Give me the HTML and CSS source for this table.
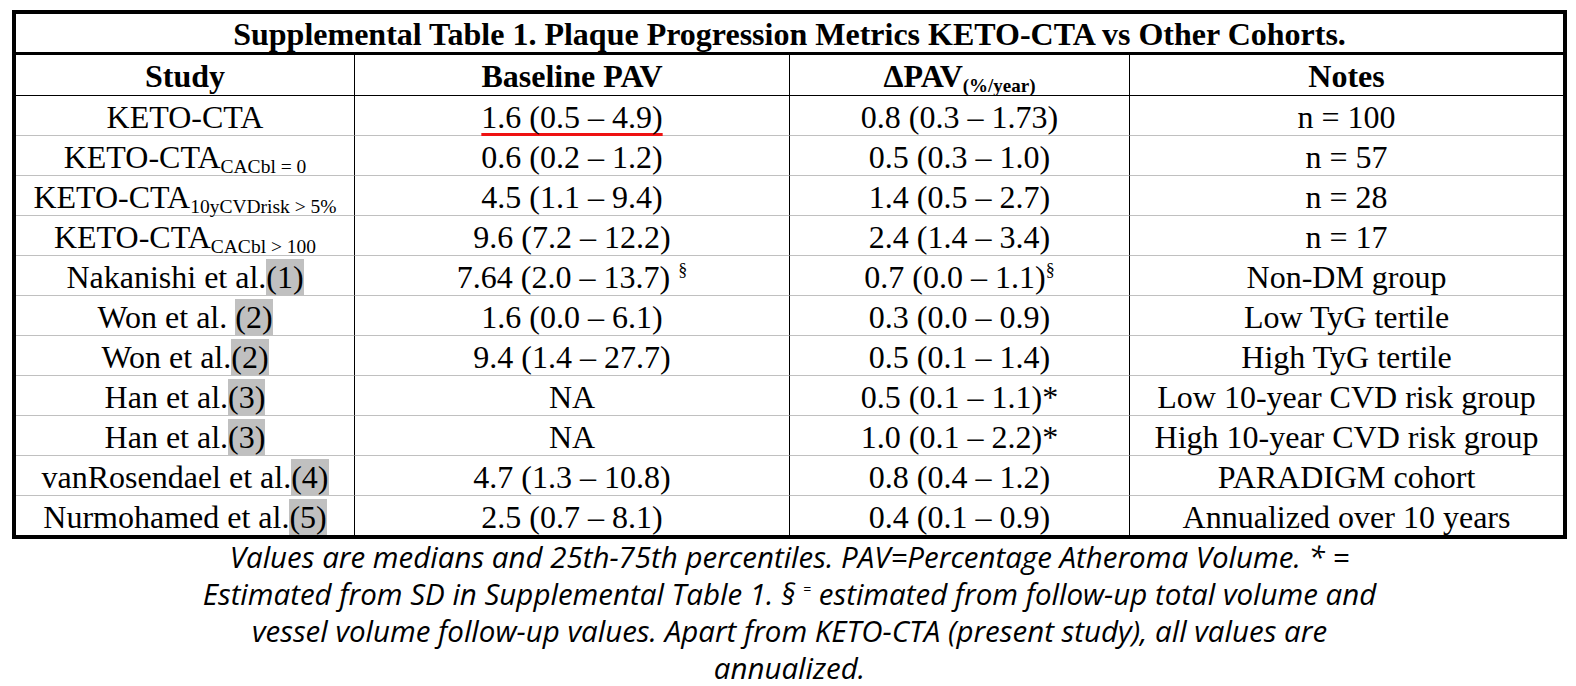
FILE: index.html
```html
<!DOCTYPE html>
<html>
<head>
<meta charset="utf-8">
<link rel="stylesheet" href="styles.css">
</head>
<body>
<div class="page">
  <table class="tbl">
    <colgroup>
      <col class="c1"><col class="c2"><col class="c3"><col class="c4">
    </colgroup>
    <tr class="title-row">
      <th colspan="4">Supplemental Table 1. Plaque Progression Metrics KETO-CTA vs Other Cohorts.</th>
    </tr>
    <tr class="head-row">
      <th>Study</th>
      <th>Baseline PAV</th>
      <th>ΔPAV<sub>(%/year)</sub></th>
      <th>Notes</th>
    </tr>
    <tr>
      <td>KETO-CTA</td>
      <td><span class="flag">1.6 (0.5 – 4.9)</span></td>
      <td>0.8 (0.3 – 1.73)</td>
      <td>n = 100</td>
    </tr>
    <tr>
      <td>KETO-CTA<sub>CACbl = 0</sub></td>
      <td>0.6 (0.2 – 1.2)</td>
      <td>0.5 (0.3 – 1.0)</td>
      <td>n = 57</td>
    </tr>
    <tr>
      <td>KETO-CTA<sub>10yCVDrisk &gt; 5%</sub></td>
      <td>4.5 (1.1 – 9.4)</td>
      <td>1.4 (0.5 – 2.7)</td>
      <td>n = 28</td>
    </tr>
    <tr>
      <td>KETO-CTA<sub>CACbl &gt; 100</sub></td>
      <td>9.6 (7.2 – 12.2)</td>
      <td>2.4 (1.4 – 3.4)</td>
      <td>n = 17</td>
    </tr>
    <tr>
      <td>Nakanishi et al.<span class="ref">(1)</span></td>
      <td>7.64 (2.0 – 13.7) <sup>§</sup></td>
      <td>0.7 (0.0 – 1.1)<sup>§</sup></td>
      <td>Non-DM group</td>
    </tr>
    <tr>
      <td>Won et al. <span class="ref">(2)</span></td>
      <td>1.6 (0.0 – 6.1)</td>
      <td>0.3 (0.0 – 0.9)</td>
      <td>Low TyG tertile</td>
    </tr>
    <tr>
      <td>Won et al.<span class="ref">(2)</span></td>
      <td>9.4 (1.4 – 27.7)</td>
      <td>0.5 (0.1 – 1.4)</td>
      <td>High TyG tertile</td>
    </tr>
    <tr>
      <td>Han et al.<span class="ref">(3)</span></td>
      <td>NA</td>
      <td>0.5 (0.1 – 1.1)*</td>
      <td>Low 10-year CVD risk group</td>
    </tr>
    <tr>
      <td>Han et al.<span class="ref">(3)</span></td>
      <td>NA</td>
      <td>1.0 (0.1 – 2.2)*</td>
      <td>High 10-year CVD risk group</td>
    </tr>
    <tr>
      <td>vanRosendael et al.<span class="ref">(4)</span></td>
      <td>4.7 (1.3 – 10.8)</td>
      <td>0.8 (0.4 – 1.2)</td>
      <td>PARADIGM cohort</td>
    </tr>
    <tr class="last">
      <td>Nurmohamed et al.<span class="ref">(5)</span></td>
      <td>2.5 (0.7 – 8.1)</td>
      <td>0.4 (0.1 – 0.9)</td>
      <td>Annualized over 10 years</td>
    </tr>
  </table>
  <p class="caption">Values are medians and 25th-75th percentiles. PAV=Percentage Atheroma Volume. * =<br>Estimated from SD in Supplemental Table 1. § <sup>=</sup> estimated from follow-up total volume and<br>vessel volume follow-up values. Apart from KETO-CTA (present study), all values are<br>annualized.</p>
</div>
</body>
</html>
```
FILE: styles.css
```css
html, body {
  margin: 0;
  padding: 0;
  background: #fff;
}

.page {
  padding: 10px 0 0 12px;
}

.tbl {
  border-collapse: separate;
  border-spacing: 0;
  table-layout: fixed;
  width: 1555px;
  border: 4px solid #000;
  font-family: "Liberation Serif", "Times New Roman", serif;
  color: #000;
}

.c1 { width: 339px; }
.c2 { width: 435px; }
.c3 { width: 340px; }
.c4 { width: 433px; }

.tbl th,
.tbl td {
  text-align: center;
  white-space: nowrap;
  padding: 0;
  box-sizing: border-box;
}

.title-row th {
  font-size: 32px;
  font-weight: bold;
  line-height: 35px;
  padding-top: 3px;
  border-bottom: 3px solid #000;
}

.head-row th {
  font-size: 32px;
  font-weight: bold;
  line-height: 35px;
  padding: 4px 0 1px;
  border-bottom: 1px solid #000;
  border-right: 1px solid #000;
}

.tbl td {
  font-size: 32px;
  line-height: 35px;
  padding-top: 4px;
  border-bottom: 1px solid #c0c0c0;
  border-right: 1px solid #000;
}

.head-row th:last-child,
.tbl td:last-child {
  border-right: none;
}

.tbl tr.last td {
  border-bottom: none;
}

.tbl sub {
  font-size: 19.5px;
  line-height: 0;
  vertical-align: -5px;
}

.head-row sub {
  font-size: 19px;
  vertical-align: -5px;
}

.tbl sup {
  font-size: 18px;
  line-height: 0;
  vertical-align: 12px;
}

.ref {
  background: #c0c0c0;
}

.flag {
  text-decoration: underline;
  text-decoration-color: #ee1111;
  text-decoration-thickness: 3px;
  text-decoration-skip-ink: none;
  text-underline-offset: 5px;
}

.caption {
  margin: -1px 0 0;
  width: 1555px;
  text-align: center;
  font-family: "Open Sans", "Noto Sans", sans-serif;
  font-style: italic;
  font-size: 29.5px;
  line-height: 37px;
  color: #000;
}

.caption sup {
  font-size: 14px;
  line-height: 0;
  vertical-align: 11px;
}
```
